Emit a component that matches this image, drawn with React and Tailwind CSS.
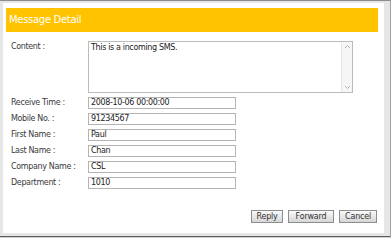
export default function App() {
  const fields = [
    { label: "Receive Time :", value: "2008-10-06 00:00:00" },
    { label: "Mobile No. :", value: "91234567" },
    { label: "First Name :", value: "Paul" },
    { label: "Last Name :", value: "Chan" },
    { label: "Company Name :", value: "CSL" },
    { label: "Department :", value: "1010" },
  ];

  const buttons = [
    { text: "Reply", w: "w-[32px]" },
    { text: "Forward", w: "w-[46px]" },
    { text: "Cancel", w: "w-[38px]" },
  ];

  return (
    <div
      className="w-[391px] h-[238px] bg-[#e6e6e6] border-t border-t-[#8c8c8c] border-b border-b-[#d0d0d0] border-r border-r-[#a0a0a0] flex flex-col text-[8px] tracking-[-0.35px] text-[#3a3a3a]"
      style={{ fontFamily: '"DejaVu Sans", Verdana, sans-serif' }}
    >
      <div className="flex-1 flex flex-col pl-[3px] pt-[2px] pr-[6px] pb-[3px] border-b border-b-[#5e5e5e]">
        <div className="flex-1 bg-white flex flex-col pt-[5px] pl-[3px] pr-[6px]">
          {/* header */}
          <div className="h-[24px] bg-[#ffc300] flex items-center pl-[3px]">
            <span className="text-white text-[10px] tracking-[-0.3px] leading-none">
              Message Detail
            </span>
          </div>

          {/* form */}
          <div className="flex flex-col pl-[5px] pt-[9px]">
            <div className="flex">
              <div className="w-[77px] leading-[10px] pt-[1px]">Content :</div>
              <div className="w-[265px] h-[52px] border border-[#bcbcbc] flex">
                <div className="flex-1 px-[2px] pt-[1px] leading-[10px] text-[#222]">
                  This is a incoming SMS.
                </div>
                <div className="w-[11px] bg-[#f6f6f6] border-l border-l-[#e6e6e6] flex flex-col justify-between items-center py-[2px]">
                  <svg width="7" height="5" viewBox="0 0 7 5">
                    <path d="M1 4 L3.5 1.5 L6 4" fill="none" stroke="#b0b0b0" strokeWidth="1" />
                  </svg>
                  <svg width="7" height="5" viewBox="0 0 7 5">
                    <path d="M1 1 L3.5 3.5 L6 1" fill="none" stroke="#b0b0b0" strokeWidth="1" />
                  </svg>
                </div>
              </div>
            </div>

            <div className="flex flex-col gap-[4px] mt-[4px]">
              {fields.map((f) => (
                <div key={f.label} className="flex items-center">
                  <div className="w-[77px] leading-[10px]">{f.label}</div>
                  <div className="w-[148px] h-[12px] border border-[#b4b4b4] flex items-center px-[2px] leading-none text-[#222]">
                    {f.value}
                  </div>
                </div>
              ))}
            </div>
          </div>

          {/* buttons */}
          <div className="flex justify-end gap-[5px] mt-[21px] pr-[1px]">
            {buttons.map((b) => (
              <button
                key={b.text}
                className={`${b.w} h-[13px] leading-none border border-[#8e8e8e] bg-gradient-to-b from-[#fafafa] to-[#d6d6d6] text-[#333] text-[8px] tracking-[-0.2px] flex items-center justify-center`}
                style={{ fontFamily: '"DejaVu Sans", Verdana, sans-serif' }}
              >
                {b.text}
              </button>
            ))}
          </div>
        </div>
      </div>
    </div>
  );
}
